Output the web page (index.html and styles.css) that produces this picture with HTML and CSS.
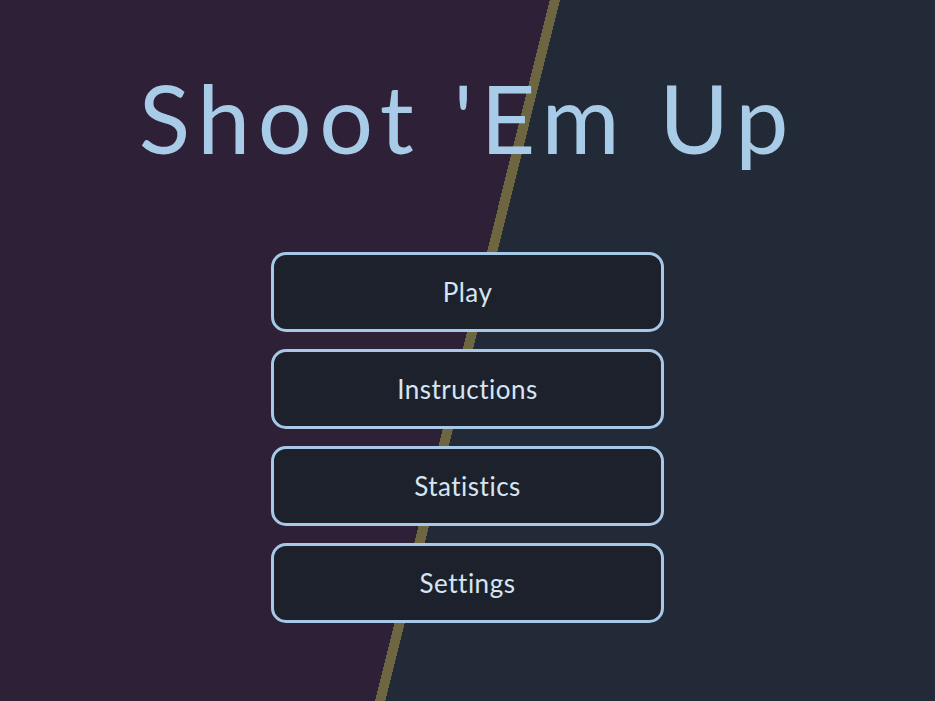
FILE: index.html
```html
<!DOCTYPE html>
<html lang="en">
<head>
<meta charset="utf-8">
<title>Shoot 'Em Up</title>
<link rel="stylesheet" href="styles.css">
</head>
<body>
<main class="menu">
  <h1 class="title">Shoot 'Em Up</h1>
  <nav class="buttons">
    <button class="btn">Play</button>
    <button class="btn">Instructions</button>
    <button class="btn">Statistics</button>
    <button class="btn">Settings</button>
  </nav>
</main>
</body>
</html>
```
FILE: styles.css
```css
html, body {
  margin: 0;
  padding: 0;
  width: 100%;
  height: 100%;
}
body {
  background: linear-gradient(104deg,
    #2e2037 0,
    #2e2037 calc(50% - 5px),
    #6d6641 calc(50% - 5px),
    #6d6641 calc(50% + 5px),
    #232a37 calc(50% + 5px),
    #232a37 100%);
  font-family: "Lato", "Noto Sans", sans-serif;
  overflow: hidden;
}
.menu {
  display: flex;
  flex-direction: column;
  align-items: center;
  padding-top: 62px;
}
.title {
  margin: 0;
  font-family: "Lato", sans-serif;
  font-weight: 400;
  font-size: 95px;
  line-height: 110px;
  letter-spacing: 7.6px;
  color: #a8cbe8;
}
.buttons {
  margin-top: 80px;
  display: flex;
  flex-direction: column;
  gap: 17px;
}
.btn {
  width: 393px;
  height: 80px;
  border: 3px solid #a7c9e7;
  border-radius: 15px;
  background: #1d212b;
  color: #d6e5f2;
  font-family: "Lato", "Noto Sans", sans-serif;
  font-size: 26px;
  letter-spacing: 0.5px;
  padding: 0;
}
```
